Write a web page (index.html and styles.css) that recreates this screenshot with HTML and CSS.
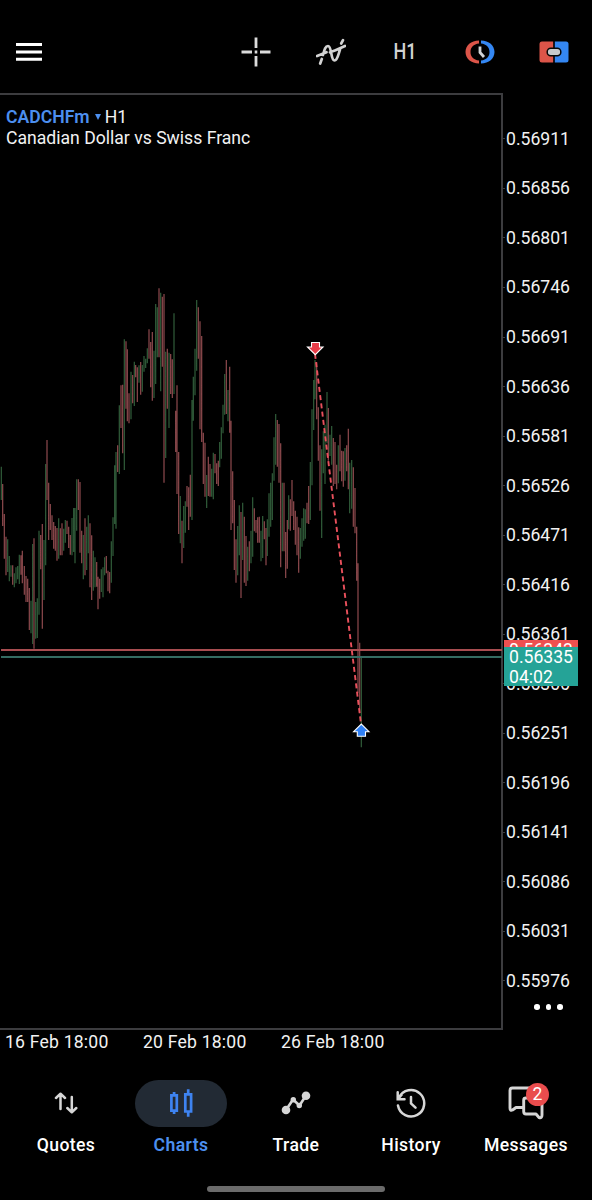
FILE: index.html
```html
<!DOCTYPE html>
<html lang="en">
<head>
<meta charset="utf-8">
<title>CADCHFm H1</title>
<link rel="stylesheet" href="styles.css">
</head>
<body>
<div class="app">
  <header class="toolbar">
    <svg class="menu" width="26" height="20" viewBox="0 0 26 20"><path d="M0 2.500H26M0 10H26M0 17.200H26" stroke="#fff" stroke-width="3"/></svg>
    <div class="tools">
      <svg width="30" height="30" viewBox="0 0 30 30"><path d="M15 .500V11M15 19V29.500M.500 15H11M19 15H29.500M13.700 15H16.300" stroke="#dcdcdc" stroke-width="2.800"/></svg>
      <svg width="30" height="28" viewBox="1 0 30 28" fill="none" stroke="#d2d2d2" stroke-width="2.700" stroke-linecap="round"><path d="M2 18L11.500 14.200M20.500 12.200L30 8M5.200 25.500L6.800 21M26.200 5.500L28 2.200M8 17C9.500 11 10.500 8 13 8C17 8 15.500 22.500 19.500 22.500C22.500 22.500 23.500 16 25 11.500M15 14.300L20.500 12.200"/></svg>
      <span class="timeframe">H1</span>
      <svg width="30" height="24" viewBox="0 0 30 24" fill="none"><path d="M14 .500V3.500C8.500 4 5.500 7.500 5.500 12S8.500 20 14 20.500V23.500C6 23.500 .500 18.500 .500 12S6 .500 14 .500Z" fill="#dc5549"/><path d="M16 .500V3.500C21.500 4 24.500 7.500 24.500 12S21.500 20 16 20.500V23.500C24 23.500 29.500 18.500 29.500 12S24 .500 16 .500Z" fill="#3487f3"/><path d="M15 6.500V12.500L19 17" stroke="#d0d3d6" stroke-width="2.800"/></svg>
      <svg width="30" height="22" viewBox="0 0 30 22"><path d="M3 .500H14.200V21.500H3Q.500 21.500 .500 19V3Q.500 .500 3 .500Z" fill="#dc5549"/><path d="M15.800 .500H27Q29.500 .500 29.500 3V19Q29.500 21.500 27 21.500H15.800Z" fill="#3487f3"/><rect x="8.200" y="7.200" width="13.600" height="7.600" rx="3.500" fill="#c7cacd" stroke="#080808" stroke-width="1.500"/></svg>
    </div>
  </header>

  <main class="chart">
    <section class="plot">
      <div class="heading">
        <div class="symbol-row"><span class="symbol">CADCHFm</span><span class="caret"></span><span>H1</span></div>
        <div class="description">Canadian Dollar vs Swiss Franc</div>
      </div>
      <svg class="series" width="502" height="934" viewBox="0 95 502 934" fill="none">
        <g stroke-width="3.800">
          <g transform="translate(0 280) scale(.33333)">
            <path class="up" d="M4 560V660M23 778V876M28 828V904M33 856V890M43 880V922M48 862V910M53 858V898M58 824V912M93 962V1060M98 792V1092M107 966V1076M112 955V1074M117 752V1004M132 780V960M137 552V856M176 715V836M191 746V812M196 720V788M216 714V826M221 684V816M225 684V850M230 598V752M250 765V898M260 740V870M265 706V820M280 812V932M285 832V922M304 868V936M309 862V952M314 832V886M334 784V908M339 712V828M344 556V732M348 516V746M358 376V582M373 178V570"/>
            <path class="down" d="M8 612V738M13 702V836M18 770V886M38 856V914M63 826V884M67 812V910M73 858V944M78 888V966M83 896V966M88 924V1050M102 775V1106M122 765V868M127 732V1046M141 480V660M146 608V780M151 672V750M156 706V780M161 726V806M166 738V812M171 744V842M181 745V826M186 730V826M201 722V762M206 740V804M211 765V824M235 598V690M240 606V818M245 752V850M255 715V886M270 730V922M275 766V960M290 846V920M294 890V988M299 896V956M319 828V880M324 872V934M329 876V940M353 496V576M363 316V444M368 314V520M378 184V386"/>
          </g>
          <g transform="translate(120 280) scale(.33333)">
            <path class="up" d="M33 275V418M43 245V378M57 256V308M67 255V335M72 228V275M77 236V264M82 205V250M102 212V354M107 72V312M112 82V232M122 38V334M137 215V534M147 218V444M162 100V342M181 648V790M191 678V804M196 664V758M216 360V720M220 290V422M225 206V346M230 60V272M260 585V684M275 566V650M280 518V658M299 486V562M304 442V536M309 374V460M314 282V404M324 330V424M353 738V886M358 676V826"/>
            <path class="down" d="M22 208V424M27 340V430M38 285V370M47 255V292M52 262V366M62 246V344M87 148V236M92 186V322M97 156V362M117 25V232M127 50V260M132 42V608M142 206V386M152 222V342M157 238V354M167 392V516M171 316V642M176 516V762M186 722V850M201 618V680M206 622V750M211 584V710M235 82V236M240 124V448M245 168V486M250 458V612M255 488V650M265 530V648M270 552V650M285 522V580M290 550V612M295 542V618M319 240V402M329 260V458M333 422V750M338 574V730M343 660V870M348 778V908"/>
          </g>
          <g transform="translate(240 330) scale(.33333)">
            <path class="up" d="M8 518V690M23 650V752M33 602V700M38 502V680M63 602V694M68 558V684M82 568V678M87 490V620M92 458V590M97 430V570M102 322V452M107 252V404M127 458V664M146 496V598M181 594V686M186 565V650M191 535V632M196 538V626M211 396V570M216 238V466M221 150V300M225 90V208M245 358V624M250 304V430M255 284V462M261 186V340M270 314V378M275 288V404M295 346V460M315 354V452M329 398V550M335 390V536M364 980V1252"/>
            <path class="down" d="M3 546V804M13 560V758M18 618V768M28 634V724M43 535V604M48 570V608M53 562V638M58 560V638M73 574V628M78 594V706M112 270V410M117 282V458M122 340V712M132 458V664M137 606V744M142 570V716M151 508V602M156 450V558M161 514V600M166 542V644M171 560V676M176 592V728M201 518V580M206 468V582M230 96V268M235 232V392M240 346V542M265 234V392M280 324V468M285 336V462M290 404V478M300 314V424M305 362V454M310 364V470M320 346V424M325 296V478M340 412V590M345 474V610M350 590V752M354 700V1090M359 938V1150"/>
          </g>
        </g>
        <path d="M1 650H502" stroke="#a84d50" stroke-width="2"/>
        <path d="M1 657H502" stroke="#356c62" stroke-width="2"/>
        <path d="M315 354L361 724" stroke="#e9505c" stroke-width="1.900" stroke-dasharray="5 3.300"/>
        <path d="M311.500 342.500H319.500V347H323L315.300 354.700L307.500 347H311.500Z" fill="#e93c48" stroke="#fff" stroke-width="1.100"/>
        <path d="M357.300 736.200H365.500V731.700H369L361.300 724L353.600 731.700H357.300Z" fill="#2f80f4" stroke="#fff" stroke-width="1.100"/>
      </svg>
    </section>
    <aside class="prices">
      <span>0.56911</span><span>0.56856</span><span>0.56801</span><span>0.56746</span><span>0.56691</span><span>0.56636</span><span>0.56581</span><span>0.56526</span><span>0.56471</span><span>0.56416</span><span>0.56361</span><span>0.56306</span><span>0.56251</span><span>0.56196</span><span>0.56141</span><span>0.56086</span><span>0.56031</span><span>0.55976</span>
      <div class="tag ask">0.56343</div>
      <div class="tag bid">0.56335<br>04:02</div>
      <div class="more"><i></i><i></i><i></i></div>
    </aside>
  </main>
  <div class="times"><span>16 Feb 18:00</span><span>20 Feb 18:00</span><span>26 Feb 18:00</span></div>

  <nav class="tabs">
    <a class="tab"><span class="pill"><svg width="24" height="22" viewBox="0 0 24 22" fill="none" stroke="#d6d6d6" stroke-width="2.500" stroke-linecap="round" stroke-linejoin="round"><path d="M6.500 17V2M2 6L6.500 1.700L11 6M17.800 5V20M13.300 16L17.800 20.300L22.300 16"/></svg></span>Quotes</a>
    <a class="tab active"><span class="pill"><svg width="24" height="28" viewBox="0 0 24 28" fill="none" stroke="#3e83f0" stroke-width="2.700"><path d="M2.400 6.300H7.800V21.700H2.400ZM16.300 5.300H22.100V22.500H16.300ZM5.100 3V6.500M5.100 21.500V25M19.200 .300V5M19.200 22.500V27.700"/></svg></span>Charts</a>
    <a class="tab"><span class="pill"><svg width="30" height="26" viewBox="0 0 30 26" fill="none" stroke="#d6d6d6" stroke-width="2.600"><path d="M5 20L12 9.500L18.500 15.500L25 5.500"/><g fill="#d6d6d6" stroke="none"><circle cx="5" cy="20" r="4.300"/><circle cx="12.300" cy="9.800" r="2.700"/><circle cx="18.300" cy="15.500" r="2.700"/><circle cx="25" cy="5.700" r="4.300"/></g></svg></span>Trade</a>
    <a class="tab"><span class="pill"><svg width="30" height="30" viewBox="0 0 30 30" fill="none" stroke="#d6d6d6" stroke-width="2.500" stroke-linecap="round"><path d="M2 17.500A13.200 13.200 0 1 0 3 9.800M1.700 4.300V11.200H8.500M2 10.800L5.500 7M15 9V15.500L19.500 19.700"/></svg></span>History</a>
    <a class="tab"><span class="pill"><svg width="36" height="34" viewBox="0 0 36 34" fill="none" stroke="#d6d6d6" stroke-width="2.900" stroke-linejoin="round"><path d="M28 9V4Q28 2 26 2H4.500Q2 2 2 4.500V22Q2 25 4.500 24L8 21.500H15.500M34 14V29Q34 32.500 31 31.500L28 28H18Q15.700 28 15.700 25.500V14Q15.700 12 18 12H34"/></svg><b class="badge">2</b></span>Messages</a>
  </nav>
  <div class="home"></div>
</div>
</body>
</html>
```
FILE: styles.css
```css
* { box-sizing: border-box; }
body { margin: 0; background: #000; color: #f2f2f2; font-family: Roboto, sans-serif; font-size: 17.600px; line-height: 20px; }
svg { display: block; flex: none; }
.app { width: 592px; height: 1200px; display: flex; flex-direction: column; overflow: hidden; }
.toolbar { height: 93px; padding: 11px 23px 0 16px; display: flex; align-items: center; justify-content: space-between; flex: none; }
.tools { width: 328px; display: flex; align-items: center; justify-content: space-between; }
.timeframe { width: 30px; text-align: center; font-size: 22px; font-weight: 500; color: #d2d2d2; transform: scaleX(.82); }
.chart { display: grid; grid-template-columns: 503px 1fr; height: 937px; flex: none; }
.plot { position: relative; border: solid #3c3c3f; border-width: 2px 2px 2px 0; }
.heading { padding: 11px 0 0 6px; }
.symbol-row { display: flex; align-items: center; height: 22px; }
.symbol { color: #4c8fef; font-weight: 600; }
.caret { margin: 0 4px 0 5px; border: solid transparent; border-width: 6px 3px 0; border-top-color: #4c8fef; }
.description { white-space: nowrap; }
.series { position: absolute; left: 0; top: 0; }
.up { stroke: #2e5837; }
.down { stroke: #87464a; }
.prices { position: relative; padding-top: 21.200px; display: flex; flex-direction: column; }
.prices > span { height: 49.530px; padding-left: 3px; display: flex; align-items: center; flex: none; }
.prices > span::before { content: ""; width: 2px; height: 1px; margin-left: -3px; margin-right: 1px; background: #3c3c3f; }
.tag { position: absolute; left: 1px; width: 74px; padding-left: 5px; color: #fff; }
.ask { top: 547px; height: 30px; background: #ee5050; }
.bid { top: 554px; height: 39px; padding-top: 1px; background: #25a397; line-height: 19.500px; }
.more { position: absolute; left: 31px; top: 911px; display: flex; gap: 6px; }
.more i { width: 5.500px; height: 5.500px; border-radius: 50%; background: #fff; }
.times { height: 50px; padding: 2px 0 0 5px; display: flex; flex: none; letter-spacing: .2px; }
.times span { width: 138px; }
.tabs { display: grid; grid-template-columns: repeat(5, 115px); padding-left: 8.500px; height: 106px; flex: none; }
.tab { display: flex; flex-direction: column; align-items: center; gap: 8px; font-weight: 500; letter-spacing: .4px; color: #fff; }
.pill { position: relative; width: 92px; height: 47px; display: flex; align-items: center; justify-content: center; border-radius: 24px; }
.tab svg { margin-bottom: 1px; }
.active { color: #4c8fef; font-weight: 600; }
.active .pill { background: #222a34; }
.badge { position: absolute; left: 46px; top: 2.500px; width: 23px; height: 23px; border-radius: 50%; background: #e94c4d; text-align: center; line-height: 23px; font-weight: 400; letter-spacing: 0; }
.home { width: 178px; height: 6px; margin: 0 auto; border-radius: 3px; background: #6b6b6b; flex: none; }
```
